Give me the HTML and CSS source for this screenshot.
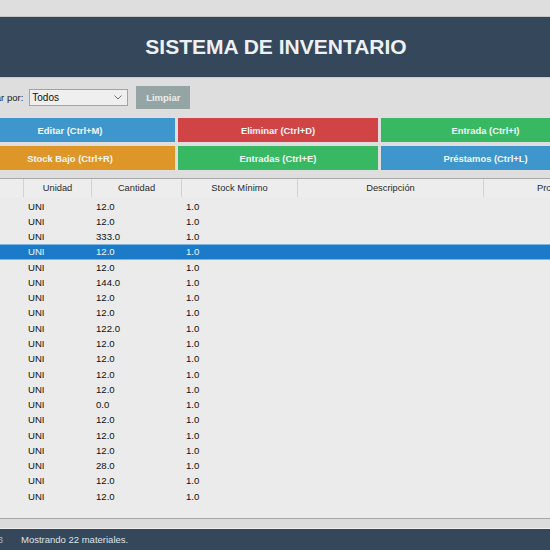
FILE: index.html
```html
<!DOCTYPE html>
<html lang="es">
<head>
<meta charset="utf-8">
<title>Sistema de Inventario</title>
<link rel="stylesheet" href="styles.css">
</head>
<body>
<div class="app">
  <div class="topbar"></div>
  <header class="header"><h1 class="title">SISTEMA DE INVENTARIO</h1></header>
  <div class="filters">
    <span class="filter-label">Filtrar por:</span>
    <div class="combo"><span class="combo-text">Todos</span><svg class="chev" width="8" height="5" viewBox="0 0 8 5"><path d="M0.5 0.5 L4 4 L7.5 0.5" fill="none" stroke="#707070" stroke-width="1"/></svg></div>
    <button class="btn-clear">Limpiar</button>
  </div>
  <div class="actions">
    <div class="act blue">Editar (Ctrl+M)</div>
    <div class="act red">Eliminar (Ctrl+D)</div>
    <div class="act green">Entrada (Ctrl+I)</div>
    <div class="act orange">Stock Bajo (Ctrl+R)</div>
    <div class="act green">Entradas (Ctrl+E)</div>
    <div class="act blue">Préstamos (Ctrl+L)</div>
  </div>
  <div class="table">
    <div class="thead">
      <div class="th c0">Nombre</div>
      <div class="th c1">Unidad</div>
      <div class="th c2">Cantidad</div>
      <div class="th c3">Stock Mínimo</div>
      <div class="th c4">Descripción</div>
      <div class="th c5">Proveedor</div>
    </div>
    <div class="tbody">
      <div class="tr"><div class="td c0"></div><div class="td c1">UNI</div><div class="td c2">12.0</div><div class="td c3">1.0</div></div>
      <div class="tr"><div class="td c0"></div><div class="td c1">UNI</div><div class="td c2">12.0</div><div class="td c3">1.0</div></div>
      <div class="tr"><div class="td c0"></div><div class="td c1">UNI</div><div class="td c2">333.0</div><div class="td c3">1.0</div></div>
      <div class="tr selected"><div class="td c0"></div><div class="td c1">UNI</div><div class="td c2">12.0</div><div class="td c3">1.0</div></div>
      <div class="tr"><div class="td c0"></div><div class="td c1">UNI</div><div class="td c2">12.0</div><div class="td c3">1.0</div></div>
      <div class="tr"><div class="td c0"></div><div class="td c1">UNI</div><div class="td c2">144.0</div><div class="td c3">1.0</div></div>
      <div class="tr"><div class="td c0"></div><div class="td c1">UNI</div><div class="td c2">12.0</div><div class="td c3">1.0</div></div>
      <div class="tr"><div class="td c0"></div><div class="td c1">UNI</div><div class="td c2">12.0</div><div class="td c3">1.0</div></div>
      <div class="tr"><div class="td c0"></div><div class="td c1">UNI</div><div class="td c2">122.0</div><div class="td c3">1.0</div></div>
      <div class="tr"><div class="td c0"></div><div class="td c1">UNI</div><div class="td c2">12.0</div><div class="td c3">1.0</div></div>
      <div class="tr"><div class="td c0"></div><div class="td c1">UNI</div><div class="td c2">12.0</div><div class="td c3">1.0</div></div>
      <div class="tr"><div class="td c0"></div><div class="td c1">UNI</div><div class="td c2">12.0</div><div class="td c3">1.0</div></div>
      <div class="tr"><div class="td c0"></div><div class="td c1">UNI</div><div class="td c2">12.0</div><div class="td c3">1.0</div></div>
      <div class="tr"><div class="td c0"></div><div class="td c1">UNI</div><div class="td c2">0.0</div><div class="td c3">1.0</div></div>
      <div class="tr"><div class="td c0"></div><div class="td c1">UNI</div><div class="td c2">12.0</div><div class="td c3">1.0</div></div>
      <div class="tr"><div class="td c0"></div><div class="td c1">UNI</div><div class="td c2">12.0</div><div class="td c3">1.0</div></div>
      <div class="tr"><div class="td c0"></div><div class="td c1">UNI</div><div class="td c2">12.0</div><div class="td c3">1.0</div></div>
      <div class="tr"><div class="td c0"></div><div class="td c1">UNI</div><div class="td c2">28.0</div><div class="td c3">1.0</div></div>
      <div class="tr"><div class="td c0"></div><div class="td c1">UNI</div><div class="td c2">12.0</div><div class="td c3">1.0</div></div>
      <div class="tr"><div class="td c0"></div><div class="td c1">UNI</div><div class="td c2">12.0</div><div class="td c3">1.0</div></div>
    </div>
  </div>
  <div class="hscroll"></div>
  <footer class="status"><span class="status-frag">v1.3</span><span class="status-text">Mostrando 22 materiales.</span></footer>
</div>
</body>
</html>
```
FILE: styles.css
```css
html, body {
  margin: 0;
  padding: 0;
  width: 550px;
  height: 550px;
  overflow: hidden;
  background: #dedede;
  font-family: "Liberation Sans", Arial, sans-serif;
}

.app {
  display: flex;
  flex-direction: column;
  width: 550px;
  height: 550px;
  overflow: hidden;
}

.topbar {
  height: 16px;
  background: #dedede;
  border-bottom: 1px solid #c4c6c8;
  flex: none;
}

.header {
  flex: none;
  height: 60px;
  background: #35475a;
  display: flex;
  align-items: center;
  justify-content: center;
  border-bottom: 1px solid #c9cbcd;
}

.title {
  margin: 0;
  font-size: 21px;
  font-weight: bold;
  color: #eef1f3;
  letter-spacing: 0;
  padding-left: 2px;
}

.filters {
  flex: none;
  display: flex;
  align-items: center;
  height: 23px;
  margin-top: 8px;
  font-size: 9.5px;
  color: #1a1a1a;
}

.filter-label {
  margin-left: -20px;
  white-space: nowrap;
}

.combo {
  margin-left: 6px;
  height: 15px;
  border: 1px solid #a3a3a3;
  background: #efefef;
  display: flex;
  align-items: center;
  justify-content: space-between;
  padding: 0 5px 0 2px;
  box-sizing: content-box;
  width: 90px;
}

.combo-text {
  font-size: 10px;
  color: #111;
}

.chev {
  display: block;
}

.btn-clear {
  margin-left: 8px;
  width: 54px;
  height: 23px;
  border: none;
  background: #95a5a6;
  color: #e8eeee;
  font-family: "Liberation Sans", Arial, sans-serif;
  font-weight: bold;
  font-size: 9.5px;
  padding: 0;
}

.actions {
  flex: none;
  display: grid;
  grid-template-columns: 210px 200px 209px;
  grid-template-rows: 24px 24px;
  column-gap: 3px;
  row-gap: 4px;
  margin-top: 9px;
  margin-left: -35px;
}

.act {
  display: flex;
  align-items: center;
  justify-content: center;
  color: #f3f6f8;
  font-weight: bold;
  font-size: 9.4px;
  white-space: nowrap;
}

.blue { background: #3f96cd; }
.red { background: #d04446; }
.green { background: #39b863; }
.orange { background: #de9628; }

.table {
  flex: none;
  margin-top: 8px;
  height: 339px;
  border-top: 1px solid #a9a9a9;
  background: #ebebeb;
  display: flex;
  flex-direction: column;
  margin-left: -126px;
  width: 800px;
}

.thead {
  display: flex;
  height: 18px;
  background: #ededed;
  font-size: 9.3px;
  color: #2a2a2a;
}

.th {
  display: flex;
  align-items: center;
  justify-content: center;
  border-right: 1px solid #d2d2d2;
  box-sizing: border-box;
  white-space: nowrap;
}

.c0 { width: 150px; }
.c1 { width: 68px; }
.c2 { width: 90px; }
.c3 { width: 116px; }
.c4 { width: 186px; }
.c5 { width: 190px; }

.th.c5 { justify-content: flex-start; padding-left: 53px; }

.tbody {
  flex: 1;
  background: #ebebeb;
  padding-top: 1.5px;
}

.tr {
  display: flex;
  height: 15.27px;
  align-items: center;
  font-size: 9.6px;
  color: #111;
}

.td {
  box-sizing: border-box;
  padding-left: 4px;
  white-space: nowrap;
}

.tr.selected {
  background: #1c7bc8;
  color: #eef5fb;
  box-shadow: inset 0 1px 0 #7fb4e0, inset 0 -1px 0 #7fb4e0;
}

.hscroll {
  flex: none;
  height: 9px;
  border-top: 1px solid #a6a6a6;
  background: #dcdcdc;
  border-bottom: 1px solid #eeeeee;
}

.status {
  flex: 1;
  background: #35475a;
  display: flex;
  align-items: center;
  font-size: 9.5px;
  color: #dde3e8;
}

.status-frag {
  margin-left: -15px;
  white-space: nowrap;
  color: #aab4bd;
}

.status-text {
  margin-left: 18px;
  white-space: nowrap;
}
```
